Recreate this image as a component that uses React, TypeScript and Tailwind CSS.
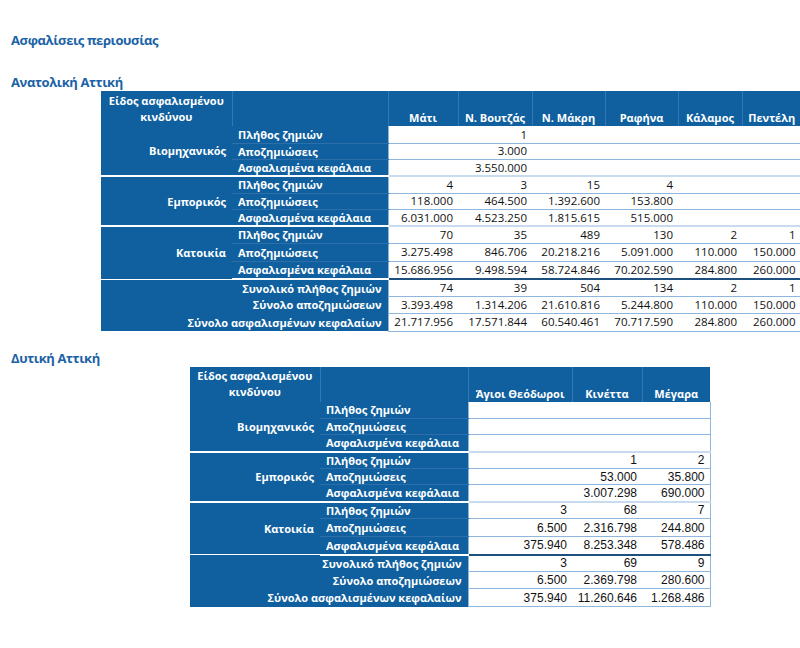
import React from 'react';

type Group = { name: string; rows: { label: string; values: string[]; h: number }[] };

const rowLabels = ['Πλήθος ζημιών', 'Αποζημιώσεις', 'Ασφαλισμένα κεφάλαια'];
const totalLabels = ['Συνολικό πλήθος ζημιών', 'Σύνολο αποζημιώσεων', 'Σύνολο ασφαλισμένων κεφαλαίων'];

const eastCols = ['Μάτι', 'Ν. Βουτζάς', 'Ν. Μάκρη', 'Ραφήνα', 'Κάλαμος', 'Πεντέλη'];
const eastGroups: Group[] = [
  {
    name: 'Βιομηχανικός',
    rows: [
      { label: rowLabels[0], values: ['', '1', '', '', '', ''], h: 17 },
      { label: rowLabels[1], values: ['', '3.000', '', '', '', ''], h: 16 },
      { label: rowLabels[2], values: ['', '3.550.000', '', '', '', ''], h: 17 },
    ],
  },
  {
    name: 'Εμπορικός',
    rows: [
      { label: rowLabels[0], values: ['4', '3', '15', '4', '', ''], h: 17 },
      { label: rowLabels[1], values: ['118.000', '464.500', '1.392.600', '153.800', '', ''], h: 16 },
      { label: rowLabels[2], values: ['6.031.000', '4.523.250', '1.815.615', '515.000', '', ''], h: 17 },
    ],
  },
  {
    name: 'Κατοικία',
    rows: [
      { label: rowLabels[0], values: ['70', '35', '489', '130', '2', '1'], h: 17 },
      { label: rowLabels[1], values: ['3.275.498', '846.706', '20.218.216', '5.091.000', '110.000', '150.000'], h: 18 },
      { label: rowLabels[2], values: ['15.686.956', '9.498.594', '58.724.846', '70.202.590', '284.800', '260.000'], h: 18 },
    ],
  },
];
const eastTotals = [
  ['74', '39', '504', '134', '2', '1'],
  ['3.393.498', '1.314.206', '21.610.816', '5.244.800', '110.000', '150.000'],
  ['21.717.956', '17.571.844', '60.540.461', '70.717.590', '284.800', '260.000'],
];

const westCols = ['Άγιοι Θεόδωροι', 'Κινέττα', 'Μέγαρα'];
const westGroups: Group[] = [
  {
    name: 'Βιομηχανικός',
    rows: [
      { label: rowLabels[0], values: ['', '', ''], h: 17 },
      { label: rowLabels[1], values: ['', '', ''], h: 16 },
      { label: rowLabels[2], values: ['', '', ''], h: 17 },
    ],
  },
  {
    name: 'Εμπορικός',
    rows: [
      { label: rowLabels[0], values: ['', '1', '2'], h: 17 },
      { label: rowLabels[1], values: ['', '53.000', '35.800'], h: 16 },
      { label: rowLabels[2], values: ['', '3.007.298', '690.000'], h: 17 },
    ],
  },
  {
    name: 'Κατοικία',
    rows: [
      { label: rowLabels[0], values: ['3', '68', '7'], h: 17 },
      { label: rowLabels[1], values: ['6.500', '2.316.798', '244.800'], h: 18 },
      { label: rowLabels[2], values: ['375.940', '8.253.348', '578.486'], h: 18 },
    ],
  },
];
const westTotals = [
  ['3', '69', '9'],
  ['6.500', '2.369.798', '280.600'],
  ['375.940', '11.260.646', '1.268.486'],
];

function InsuranceTable({
  cols,
  widths,
  groups,
  totals,
  valueFont,
}: {
  cols: string[];
  widths: number[];
  groups: Group[];
  totals: string[][];
  valueFont: string;
}) {
  const total = widths.reduce((a, b) => a + b, 0);
  return (
    <table className="table-fixed border-collapse text-[11px] leading-none" style={{ width: total }}>
      <colgroup>
        {widths.map((w, i) => (
          <col key={i} style={{ width: w }} />
        ))}
      </colgroup>
      <tbody>
        {/* header */}
        <tr className="h-[35px] bg-[#10609f] font-bold text-white">
          <td className="border-r border-[#3278b4] px-1 text-center align-middle leading-[16px]">
            Είδος ασφαλισμένου
            <br />
            κινδύνου
          </td>
          <td className="border-r border-[#3278b4]" />
          {cols.map((c, i) => (
            <td
              key={c}
              className={`pb-[3px] text-center align-bottom whitespace-nowrap ${
                i < cols.length - 1 ? 'border-r border-[#3278b4]' : ''
              }`}
            >
              {c}
            </td>
          ))}
        </tr>

        {groups.map((g, gi) =>
          g.rows.map((r, ri) => {
            const first = ri === 0;
            const last = ri === g.rows.length - 1;
            const lastGroup = gi === groups.length - 1;
            const topLine = first && gi > 0 ? 'border-t-2 border-t-white' : '';
            const bottomDark = last && lastGroup;
            return (
              <tr key={g.name + ri} style={{ height: r.h }}>
                {first && (
                  <td
                    rowSpan={3}
                    className={`bg-[#10609f] pr-[6px] text-right align-middle font-bold text-white ${topLine} ${
                      bottomDark ? 'border-b-2 border-b-white' : ''
                    }`}
                  >
                    {g.name}
                  </td>
                )}
                <td
                  className={`bg-[#10609f] pl-[6px] text-left align-middle font-bold whitespace-nowrap text-white ${topLine} ${
                    !last ? 'border-b border-b-[#2c6fab]' : ''
                  } ${bottomDark ? 'border-b-2 border-b-white' : ''}`}
                >
                  {r.label}
                </td>
                {r.values.map((v, vi) => (
                  <td
                    key={vi}
                    className={`bg-white pr-[5px] text-right align-middle whitespace-nowrap text-[#111] ${valueFont} ${
                      first && gi > 0 ? 'border-t-2 border-t-[#c9dcef]' : ''
                    } ${bottomDark ? 'border-b-2 border-b-[#1d4f7f]' : 'border-b border-b-[#8fb6dc]'} ${
                      vi === 0 ? 'border-l border-l-[#8fb6dc]' : ''
                    } ${vi === r.values.length - 1 ? 'border-r border-r-[#8fb6dc]' : ''}`}
                  >
                    {v}
                  </td>
                ))}
              </tr>
            );
          })
        )}

        {totals.map((vals, ti) => (
          <tr key={ti} style={{ height: ti === 2 ? 18 : 17 }}>
            <td
              colSpan={2}
              className={`bg-[#10609f] pr-[6px] text-right align-middle font-bold whitespace-nowrap text-white ${
                ti === 0 ? 'border-t border-t-white' : ''
              }`}
            >
              {totalLabels[ti]}
            </td>
            {vals.map((v, vi) => (
              <td
                key={vi}
                className={`bg-white pr-[5px] text-right align-middle whitespace-nowrap text-[#111] ${valueFont} border-b border-b-[#8fb6dc] ${
                  ti === 0 ? 'border-t border-t-white' : ''
                } ${vi === 0 ? 'border-l border-l-[#8fb6dc]' : ''} ${
                  vi === vals.length - 1 ? 'border-r border-r-[#8fb6dc]' : ''
                }`}
              >
                {v}
              </td>
            ))}
          </tr>
        ))}
      </tbody>
    </table>
  );
}

export default function App() {
  return (
    <div className="h-[648px] w-[800px] overflow-hidden bg-white font-['Open_Sans',sans-serif]">
      <h1 className="pt-[31px] pl-[11px] text-[13px] leading-[18px] font-bold tracking-[-0.4px] text-[#1a62a6]">
        Ασφαλίσεις περιουσίας
      </h1>
      <h2 className="pt-[24px] pl-[11px] text-[13px] leading-[18px] font-bold tracking-[-0.4px] text-[#1a62a6]">
        Ανατολική Αττική
      </h2>
      <div className="pl-[101px]">
        <InsuranceTable
          cols={eastCols}
          widths={[131, 156, 70, 74, 73, 73, 64, 59]}
          groups={eastGroups}
          totals={eastTotals}
          valueFont="font-['Open_Sans',sans-serif] text-[11.5px]"
        />
      </div>
      <h2 className="pt-[17px] pl-[11px] text-[13px] leading-[18px] font-bold tracking-[-0.4px] text-[#1a62a6]">
        Δυτική Αττική
      </h2>
      <div className="pt-0 pl-[190px]">
        <InsuranceTable
          cols={westCols}
          widths={[130, 148, 104, 70, 68]}
          groups={westGroups}
          totals={westTotals}
          valueFont="font-['Liberation_Sans',Arial,sans-serif] text-[12px]"
        />
      </div>
    </div>
  );
}
